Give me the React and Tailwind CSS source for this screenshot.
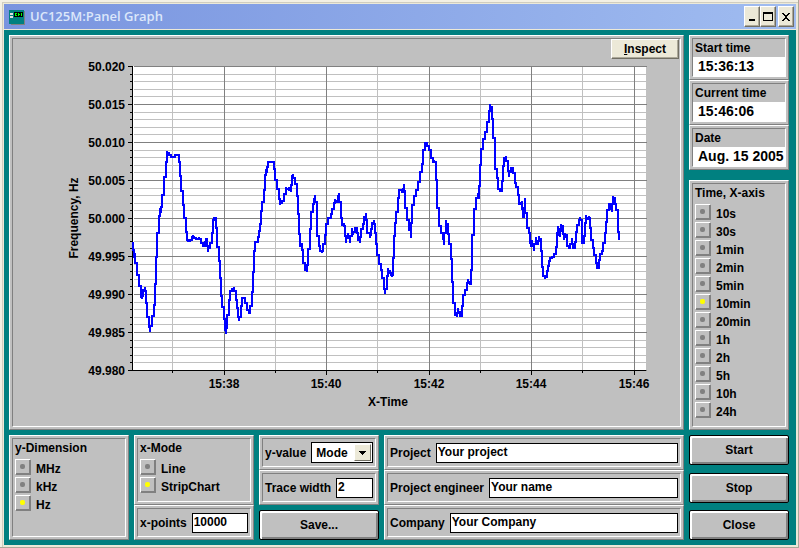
import React from 'react'
import clsx from 'clsx'

const TIME_SPANS = ['10s', '30s', '1min', '2min', '5min', '10min', '20min', '1h', '2h', '5h', '10h', '24h']

const CLOCKS = [
  {id:'start',   label:'Start time',   value:'15:36:13'},
  {id:'current', label:'Current time', value:'15:46:06'},
  {id:'date',    label:'Date',         value:'Aug. 15 2005'},
]

const Y_LABELS = ['50.020', '50.015', '50.010', '50.005', '50.000', '49.995', '49.990', '49.985', '49.980']
const X_MAJOR = [
  {x:224, label:'15:38'},
  {x:326, label:'15:40'},
  {x:429, label:'15:42'},
  {x:531, label:'15:44'},
  {x:634, label:'15:46'},
]
const X_MINOR = [172, 275, 377, 480, 582]
const Y_LINES = Array.from({length: 41}, (_, i) => ({y: Math.round(66 + i * 7.6), major: i % 5 === 0}))

// the trace comes in blocks, three sub-samples per chart unit, each block with its own origin
const BLOCKS = [
  {x:120, y:140, data:'40,305 42,355 46,340 52,400 57,408 62,465 66,478 70,455 75,440 79,462 82,515 86,545 91,577 96,540 103,515 106,470 109,390 112,310 116,250 120,203 123,220 127,180 132,150 133,120 138,100 141,33 147,42 153,44 159,54 165,46 170,42 177,47 180,85 184,130 190,175 193,215 199,253 202,300 205,298 210,307 215,295 219,285 223,298 228,290 232,300 237,292 243,300 248,318 254,314 258,295 262,300 265,335 269,310 272,305 276,310 278,250 282,230 288,238 292,290 296,350 299,375 302,450 306,485 311,515 314,555 319,582 322,545 326,505 331,452 337,450 343,440 347,465 350,492 354,515 358,543 362,520 366,475 370,470 376,475 380,500 386,518 391,515 395,480 399,430 401,360 406,307 413,303 417,280'},
  {x:260, y:140, data:'0,268 2,235 6,188 12,180 16,120 19,88 22,100 25,62 30,70 35,64 41,65 44,105 50,135 57,160 61,195 66,182 73,180 78,140 84,150 88,140 92,155 97,115 100,103 106,125 110,135 113,200 118,240 121,320 125,310 130,350 134,385 141,396 145,350 149,300 153,235 158,195 162,185 166,165 170,205 172,265 177,310 181,325 186,340 190,325 195,300 199,270 204,235 212,230 217,210 223,200 226,178 230,190 234,175 238,158 242,210 246,258 252,250 255,265 259,310 264,280 270,308 275,265 280,285 285,265 290,265 294,290 299,308 304,270 309,260 313,240 317,218 322,260 330,293 334,275 337,255 341,240 345,265 349,290 352,330 356,360 362,380 367,400 372,430 376,462 380,430 385,385 389,400 392,395 395,412 398,395 401,310 404,265 409,235 413,195 417,150'},
  {x:400, y:90, data:'0,298 5,302 9,308 12,283 16,320 21,388 28,392 34,445 37,350 42,335 47,300 54,300 61,250 67,240 70,205 75,155 81,162 87,175 93,185 98,220 103,210 107,220 111,320 117,385 122,430 128,425 133,465 138,390 143,415 146,450 152,475 155,540 160,610 165,670 171,682 175,655 179,678 186,675 189,620 196,610 201,592 205,567 209,585 213,580 216,500 217,438 222,430 223,375 228,335 233,310 236,328 240,250 244,200 250,152 256,140 262,110 267,80 271,41 276,60 279,115 284,175 286,232 291,240 294,285 299,305 305,300 308,245 313,210 319,198 323,225 328,260 332,230 335,250 338,230 344,265 347,290 354,292 356,340'},
  {x:520, y:140, data:'3,195 6,182 9,232 13,230 16,175 20,260 28,265 30,295 34,322 37,300 43,332 48,290 53,315 57,288 62,305 66,360 70,400 76,416 80,405 83,380 87,375 90,350 96,357 101,345 107,338 110,300 114,257 118,275 121,290 124,252 129,265 133,300 136,280 140,290 142,315 147,318 151,328 156,293 160,327 165,322 167,290 170,262 176,250 181,232 185,250 187,312 192,305 195,270 199,225 203,240 206,228 211,237 214,290 219,305 222,340 228,350 232,385 236,380 239,340 245,345 250,322 254,295 258,260 262,230 266,188 272,195 277,217 279,168 284,180 287,205 293,212 295,250 298,300'},
]

const POINTS = BLOCKS.flatMap(b => b.data.split(' ').map(p => {
  const [x, y] = p.split(',').map(Number)
  return [Math.round(b.x + x / 3), Math.round(b.y + y / 3)]
}))

// stepped line, every jump is split halfway between two samples
const TRACE = POINTS.map(([x, y], i) => {
  if (i === 0) return `M${x} ${y}`
  return `V${Math.round((POINTS[i - 1][1] + y) / 2)}H${x}V${y}`
}).join('')

function Panel({ className, children }) {
  return (
    <div className="border border-t-white border-l-white border-r-[#808080] border-b-[#808080] bg-[#c0c0c0] p-[2px] flex">
      <div className={clsx('flex-1 min-w-0 border border-t-[#808080] border-l-[#808080] border-r-white border-b-white', className)}>
        {children}
      </div>
    </div>
  )
}

function RadioPanel({ title, name, options, checked, className }) {
  return (
    <Panel className={className}>
      <fieldset className="pl-[2px]">
        <legend className="h-5 leading-[18px]">{title}</legend>
        {options.map(o => (
          <label key={o} className="flex h-[18px] gap-[5px]">
            <input
              type="radio"
              name={name}
              defaultChecked={o === checked}
              className="appearance-none w-4 h-4 shrink-0 flex items-center justify-center pr-px pb-px border border-t-white border-l-white border-r-[#808080] border-b-[#808080] shadow-[inset_-1px_-1px_0_#808080] before:block before:w-[5px] before:h-[5px] before:rounded-[2px] before:bg-[#808080] checked:before:bg-[#ffff00]"
            />
            <span className="leading-5">{o}</span>
          </label>
        ))}
      </fieldset>
    </Panel>
  )
}

function Field({ id, label, value }) {
  return (
    <Panel className="h-[29px] flex items-center gap-[5px] px-[2px]">
      <label htmlFor={id} className="whitespace-nowrap">{label}</label>
      <input id={id} defaultValue={value} className="flex-1 min-w-0 h-5 border border-black bg-white px-px pb-[2px] leading-4" />
    </Panel>
  )
}

function PushButton({ children }) {
  return (
    <button className="h-[30px] w-full rounded-[2px] border border-black bg-[#c0c0c0] shadow-[inset_2px_2px_0_#fff,inset_-2px_-2px_0_#808080] text-center">
      {children}
    </button>
  )
}

function CaptionButton({ label, children }) {
  return (
    <button aria-label={label} className="w-4 h-[21px] bg-[#ece9d8] border border-t-white border-l-white border-r-[#716f64] border-b-[#716f64] shadow-[inset_-1px_-1px_0_#aca899] flex items-center justify-center">
      <svg width="12" height="12" viewBox="0 0 12 12" className="shrink-0" shapeRendering="crispEdges">{children}</svg>
    </button>
  )
}

function TitleBar() {
  return (
    <header className="h-[25px] flex items-center pl-[5px] pr-[2px] bg-linear-to-r from-[#7994df] to-[#a0bcf0]">
      <svg width="17" height="16" viewBox="0 0 17 16" shapeRendering="crispEdges" aria-hidden="true">
        <rect x="2" y="2" width="14" height="14" fill="#808080" />
        <rect x="0" y="1" width="15" height="14" fill="#008080" />
        <rect x="1" y="4" width="3" height="2" fill="#e0e0e0" />
        <rect x="1" y="7" width="3" height="2" fill="#e0e0e0" />
        <rect x="5" y="3" width="9" height="5" fill="#000" />
        <path d="M6 4h2v1h-1v1h1v1h-2M9 4h1v3h-1M10 5h1v1h-1M12 4h1v3h-1" fill="#00ff00" />
      </svg>
      <h1 className="flex-1 pl-1 font-['Open_Sans',sans-serif] text-[13px] font-semibold text-[#dce7fa]">UC125M:Panel Graph</h1>
      <CaptionButton label="Minimize"><path d="M3 8h6v2h-6z" /></CaptionButton>
      <CaptionButton label="Maximize"><path d="M1 1h10v9h-10zM2 3v6h8v-6z" fillRule="evenodd" /></CaptionButton>
      <span className="w-[2px]" />
      <CaptionButton label="Close window">
        <path d="M2 2h2v1h1v1h2v-1h1v-1h2v1h-1v1h-1v1h-1v2h1v1h1v1h1v1h-2v-1h-1v-1h-2v1h-1v1h-2v-1h1v-1h1v-1h1v-2h-1v-1h-1v-1h-1z" />
      </CaptionButton>
    </header>
  )
}

function Chart() {
  return (
    <svg viewBox="13 59 667 367" className="block w-full h-auto font-['Liberation_Sans',Arial,sans-serif] text-[12px] font-bold" role="img" aria-label="Frequency over time">
      <g shapeRendering="crispEdges">
        <rect x="133" y="66" width="513" height="304" fill="#fff" />
        {X_MINOR.map(x => <rect key={x} x={x} y="66" width="1" height="304" fill="#c0c0c0" />)}
        {Y_LINES.filter(l => !l.major).map(l => <rect key={l.y} x="134" y={l.y} width="512" height="1" fill="#c0c0c0" />)}
        {X_MAJOR.map(m => <rect key={m.x} x={m.x} y="66" width="1" height="304" fill="#808080" />)}
        {Y_LINES.filter(l => l.major).map(l => <rect key={l.y} x="134" y={l.y} width="513" height="1" fill="#808080" />)}
        <rect x="132" y="66" width="1" height="305" />
        <rect x="132" y="370" width="514" height="1" />
        {Y_LINES.map(l => <rect key={l.y} x={l.major ? 128 : 130} y={l.y} width={l.major ? 4 : 2} height="1" />)}
        {X_MAJOR.map(m => <rect key={m.x} x={m.x} y="371" width="1" height="4" />)}
        {X_MINOR.map(x => <rect key={x} x={x} y="371" width="1" height="2" />)}
        <path d={TRACE} fill="none" stroke="#0000ff" strokeWidth="2" />
      </g>
      {Y_LABELS.map((t, i) => <text key={t} x="125" y={71 + i * 38} textAnchor="end">{t}</text>)}
      {X_MAJOR.map(m => <text key={m.x} x={m.x} y="388" textAnchor="middle">{m.label}</text>)}
      <text x="388" y="406" textAnchor="middle">X-Time</text>
      <text transform="translate(78 218) rotate(-90)" textAnchor="middle">Frequency, Hz</text>
    </svg>
  )
}

export default function App() {
  return (
    <div className="bg-[#ece9d8] pt-1 pl-1 pr-[3px] pb-[3px] shadow-[inset_-1px_-1px_0_#aca899,inset_2px_2px_0_#f3f0e4,inset_3px_3px_0_#d0cdbf] font-['Liberation_Sans',Arial,sans-serif] text-[12px] font-bold text-black">
      <TitleBar />
      <main className="flex gap-[5px] bg-[#008080] border-t border-[#ece9d8] pt-[5px] pb-[5px] pl-[5px] pr-[7px]">
        <div className="flex-1 min-w-0 flex flex-col gap-[5px]">
          <Panel>
            <div className="flex justify-end pr-px">
              <button className="h-5 w-[68px] bg-[#ece9d8] border border-t-white border-l-white border-r-[#716f64] border-b-[#716f64] shadow-[inset_-1px_-1px_0_#aca899]">
                <u>I</u>nspect
              </button>
            </div>
            <Chart />
          </Panel>

          <div className="flex gap-[5px]">
            <div className="w-[120px] grid grid-cols-1">
              <RadioPanel title="y-Dimension" name="dimension" options={['MHz', 'kHz', 'Hz']} checked="Hz" />
            </div>
            <div className="w-[120px] grid grid-cols-1 grid-rows-[70px_35px]">
              <RadioPanel title="x-Mode" name="mode" options={['Line', 'StripChart']} checked="StripChart" />
              <Field id="points" label="x-points" value="10000" />
            </div>
            <div className="w-[120px]">
              <Panel className="h-[29px] flex items-center gap-[5px] px-[2px]">
                <label htmlFor="yvalue" className="whitespace-nowrap">y-value</label>
                <div className="relative flex-1 min-w-0">
                  <select id="yvalue" className="appearance-none block w-full h-[21px] border border-black bg-white pl-1">
                    <option>Mode</option>
                  </select>
                  <span className="absolute right-[2px] top-[2px] w-[17px] h-[17px] bg-[#ece9d8] border border-t-white border-l-white border-r-[#716f64] border-b-[#716f64] flex items-center justify-center pointer-events-none">
                    <svg width="7" height="4" viewBox="0 0 7 4" shapeRendering="crispEdges"><path d="M0 0h7v1h-1v1h-1v1h-1v1h-1v-1h-1v-1h-1v-1h-1z" /></svg>
                  </span>
                </div>
              </Panel>
              <Field id="trace" label="Trace width" value="2" />
              <div className="pt-[5px]">
                <PushButton>Save...</PushButton>
              </div>
            </div>
            <div className="flex-1 min-w-0">
              <Field id="project" label="Project" value="Your project" />
              <Field id="engineer" label="Project engineer" value="Your name" />
              <Field id="company" label="Company" value="Your Company" />
            </div>
          </div>
        </div>

        <aside className="w-[100px] shrink-0 flex flex-col">
          {CLOCKS.map(c => (
            <Panel key={c.id}>
              <label htmlFor={c.id} className="block h-[18px] leading-[18px] pl-[2px]">{c.label}</label>
              <output id={c.id} className="block h-[19px] leading-[19px] bg-white pl-[5px] text-[14px] whitespace-nowrap">{c.value}</output>
            </Panel>
          ))}
          <div className="grid h-[250px] mt-[10px]">
            <RadioPanel title="Time, X-axis" name="span" options={TIME_SPANS} checked="10min" />
          </div>
          <div className="flex-1 pt-[5px] flex flex-col justify-between">
            <PushButton>Start</PushButton>
            <PushButton>Stop</PushButton>
            <PushButton>Close</PushButton>
          </div>
        </aside>
      </main>
    </div>
  )
}
